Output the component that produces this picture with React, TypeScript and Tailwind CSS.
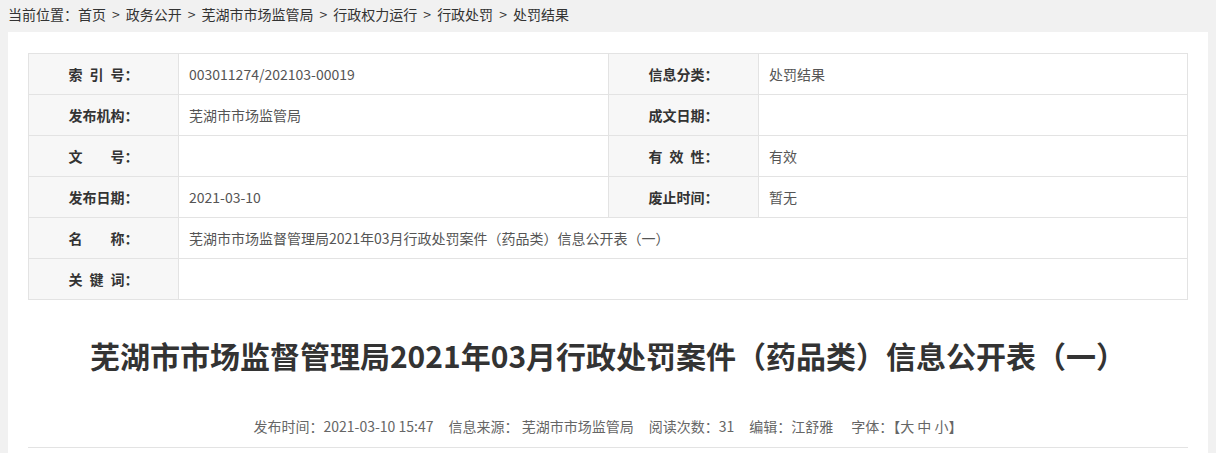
import React from "react";

const font = { fontFamily: '"Microsoft YaHei", "Noto Sans CJK SC", "Noto Sans", sans-serif' };

function Label({ children }: { children: React.ReactNode }) {
  return (
    <td className="h-[41px] border border-[#e3e3e3] bg-[#f7f7f7] text-center font-bold text-[14px] text-[#333] whitespace-pre">
      {children}
    </td>
  );
}

function Value({ children, colSpan }: { children?: React.ReactNode; colSpan?: number }) {
  return (
    <td colSpan={colSpan} className="h-[41px] border border-[#e3e3e3] bg-white px-[10px] text-[14px] text-[#555]">
      {children}
    </td>
  );
}

const crumbs = ["首页", "政务公开", "芜湖市市场监管局", "行政权力运行", "行政处罚", "处罚结果"];

export default function App() {
  return (
    <div className="min-h-[453px] bg-[#f1f1f1] text-[#333]" style={font}>
      <div className="h-[32px] pl-[8px] text-[14px] leading-[28px] text-[#333]">
        当前位置：
        {crumbs.map((c, i) => (
          <React.Fragment key={c}>
            {i > 0 && <span className="mx-[6px]">&gt;</span>}
            <span>{c}</span>
          </React.Fragment>
        ))}
      </div>
      <div className="mx-[8px] bg-white px-[20px] pt-[21px] pb-[6px]">
        <table className="w-full border-collapse table-fixed">
          <colgroup>
            <col className="w-[150px]" />
            <col className="w-[430px]" />
            <col className="w-[150px]" />
            <col />
          </colgroup>
          <tbody>
            <tr>
              <Label>{"索\u2002引\u2002号："}</Label>
              <Value>003011274/202103-00019</Value>
              <Label>信息分类：</Label>
              <Value>处罚结果</Value>
            </tr>
            <tr>
              <Label>发布机构：</Label>
              <Value>芜湖市市场监管局</Value>
              <Label>成文日期：</Label>
              <Value />
            </tr>
            <tr>
              <Label>文　　号：</Label>
              <Value />
              <Label>{"有\u2002效\u2002性："}</Label>
              <Value>有效</Value>
            </tr>
            <tr>
              <Label>发布日期：</Label>
              <Value>2021-03-10</Value>
              <Label>废止时间：</Label>
              <Value>暂无</Value>
            </tr>
            <tr>
              <Label>名　　称：</Label>
              <Value colSpan={3}>芜湖市市场监督管理局2021年03月行政处罚案件（药品类）信息公开表（一）</Value>
            </tr>
            <tr>
              <Label>{"关\u2002键\u2002词："}</Label>
              <Value colSpan={3} />
            </tr>
          </tbody>
        </table>
        <h1 className="mt-[35px] text-center text-[30px] font-bold leading-[40px] text-[#333]">
          芜湖市市场监督管理局2021年03月行政处罚案件（药品类）信息公开表（一）
        </h1>
        <div className="mt-[41px] pb-[11px] border-b border-[#e3e3e3] flex justify-center gap-[15px] text-[14px] leading-[20px] text-[#666] whitespace-pre">
          <span>发布时间：2021-03-10 15:47</span>
          <span>信息来源： 芜湖市市场监管局</span>
          <span>阅读次数：31</span>
          <span>编辑：江舒雅</span>
          <span className="ml-[3px]">字体：【大 中 小】</span>
        </div>
      </div>
    </div>
  );
}
